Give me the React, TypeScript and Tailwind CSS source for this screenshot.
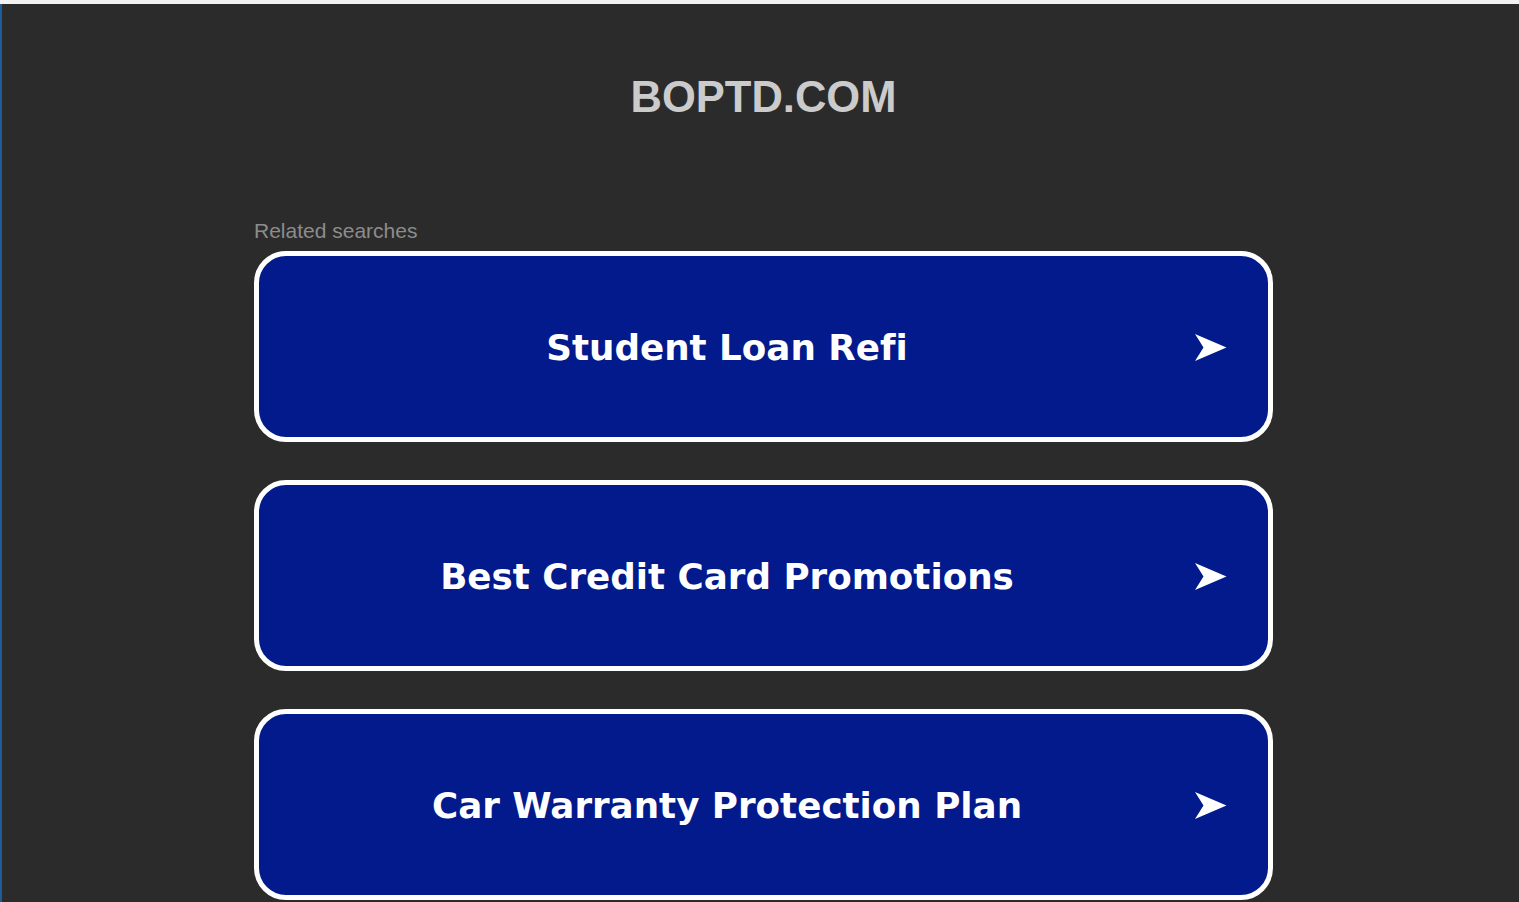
import React from "react";

const items = ["Student Loan Refi", "Best Credit Card Promotions", "Car Warranty Protection Plan"];

function Arrow() {
  return (
    <svg width="32" height="27" viewBox="0 0 32 27" className="block">
      <path d="M0 0 L31.5 13.5 L0 27 L8.5 13.5 Z" fill="#ffffff" />
    </svg>
  );
}

export default function App() {
  return (
    <div className="min-h-[902px] h-[902px] overflow-hidden bg-[#2b2b2b] flex flex-col">
      <div className="h-[4px] bg-[#f2f2f2] shrink-0" />
      <div className="flex flex-1 min-h-0">
        <div className="w-[2px] bg-[#1d5c9b] shrink-0" />
        <div className="flex-1 pl-[6px]">
          <div
            className="mt-[68px] text-center text-[43.5px] leading-[50px] font-bold text-[#cbcbcb]"
            style={{ fontFamily: '"Liberation Sans", Arial, sans-serif' }}
          >
            BOPTD.COM
          </div>
          <div className="w-[1019px] mx-auto mt-[97px]">
            <div
              className="text-[21px] leading-[24px] text-[#8c8c8c]"
              style={{ fontFamily: '"Liberation Sans", Arial, sans-serif' }}
            >
              Related searches
            </div>
            <div className="mt-[8px] flex flex-col gap-[38px]">
              {items.map((t) => (
                <div
                  key={t}
                  className="h-[191px] rounded-[32px] border-[5px] border-white bg-[#021a8b] flex items-center"
                >
                  <div
                    className="flex-1 text-center text-white font-bold text-[35.7px] leading-none pt-[3px] [font-variant-ligatures:none]"
                    style={{ fontFamily: '"DejaVu Sans", Verdana, sans-serif' }}
                  >
                    {t}
                  </div>
                  <div className="pr-[41px] pt-[1px]">
                    <Arrow />
                  </div>
                </div>
              ))}
            </div>
          </div>
        </div>
      </div>
    </div>
  );
}
